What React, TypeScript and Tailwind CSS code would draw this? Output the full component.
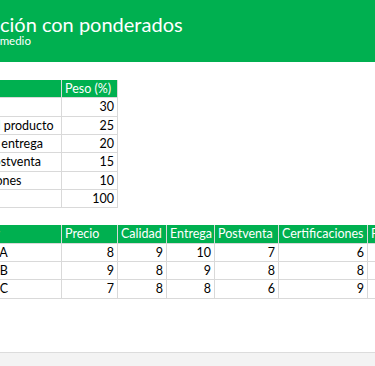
const criterios: [string, number][] = [
  ["Precio", 30],
  ["Calidad del producto", 25],
  ["Tiempo de entrega", 20],
  ["Servicio postventa", 15],
  ["Certificaciones", 10],
  ["Total", 100],
];

const columnas = ["Precio", "Calidad", "Entrega", "Postventa", "Certificaciones"];

const proveedores: [string, number[]][] = [
  ["Proveedor A", [8, 9, 10, 7, 6]],
  ["Proveedor B", [9, 8, 9, 8, 8]],
  ["Proveedor C", [7, 8, 8, 6, 9]],
];

const pesos = [30, 25, 20, 15, 10];

function puntuacion(notas: number[]) {
  return notas.reduce((acc, n, i) => acc + (n * pesos[i]) / 100, 0).toFixed(2);
}

const head = "bg-[#00b050] text-white h-[17.33px] leading-[17.33px] px-[3px] whitespace-nowrap overflow-hidden";
const cell = "bg-white text-black h-[17.33px] leading-[17.33px] px-[3px] whitespace-nowrap overflow-hidden";
const label = "bg-white text-black h-[17.33px] leading-[17.33px] pr-[3px] whitespace-nowrap overflow-hidden";

export default function App() {
  return (
    <div className="w-[375px] h-[366px] overflow-hidden bg-white flex flex-col font-['Lato',sans-serif]">
      <div className="flex-1 -ml-[77px] w-[720px]">
        <div className="bg-[#00b050] h-[62px] pl-5 pt-3 text-white">
          <h1 className="text-[20px] leading-[24px]">Evaluación con ponderados</h1>
          <p className="text-[11.5px] leading-[12px] -mt-px ml-[1px]">Nivel: Intermedio</p>
        </div>

        <div className="px-4 pt-[18px]">
          <div className="grid grid-cols-[121px_55px] gap-px bg-[#d9d9d9] border-x border-b border-[#d9d9d9] w-max text-[12.5px]">
            <div className={head}>Criterio</div>
            <div className={head}>Peso (%)</div>
            {criterios.map(([nombre, peso]) => (
              <>
                <div key={nombre} className={label}>{nombre}</div>
                <div key={nombre + "-p"} className={cell + " text-right"}>{peso}</div>
              </>
            ))}
          </div>

          <div className="mt-[17px] grid grid-cols-[121px_55px_48px_47px_63px_88px_90px] gap-px bg-[#d9d9d9] border-x border-b border-[#d9d9d9] w-max text-[12.5px]">
            <div className={head}>Proveedor</div>
            {columnas.map((c) => (
              <div key={c} className={head}>{c}</div>
            ))}
            <div className={head}>Puntuación</div>
            {proveedores.map(([nombre, notas]) => (
              <>
                <div key={nombre} className={label}>{nombre}</div>
                {notas.map((n, i) => (
                  <div key={nombre + i} className={cell + " text-right"}>{n}</div>
                ))}
                <div key={nombre + "-t"} className={cell + " text-right"}>{puntuacion(notas)}</div>
              </>
            ))}
          </div>
        </div>
      </div>
      <div className="h-[14px] shrink-0 bg-[#f3f3f3] border-t border-[#dcdcdc]"></div>
    </div>
  );
}
